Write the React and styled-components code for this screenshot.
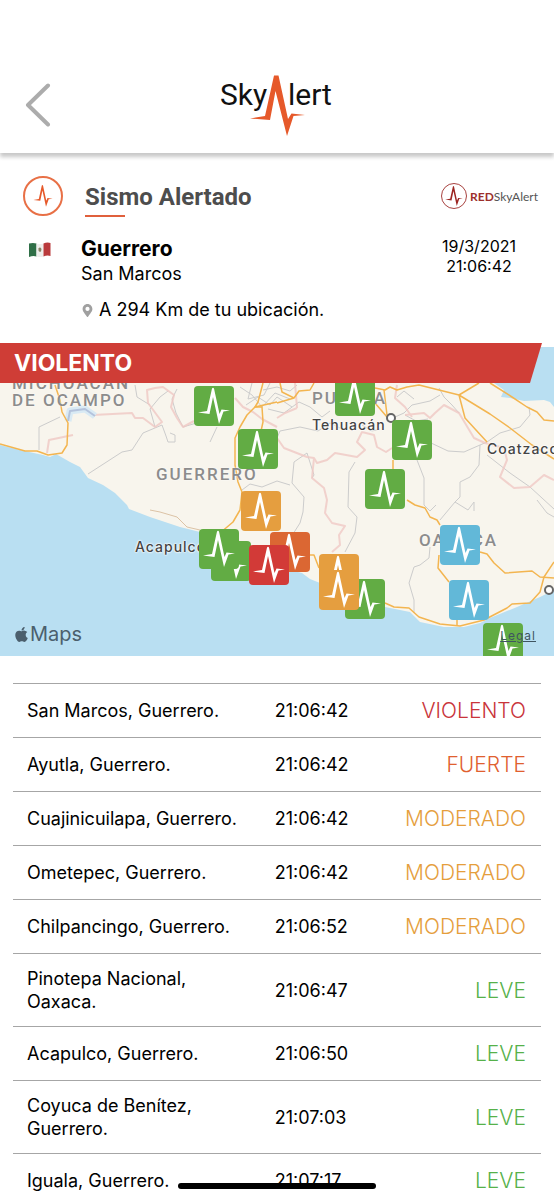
import React from "react";
import styled, { createGlobalStyle } from "styled-components";
import { FaApple, FaMapMarkerAlt } from "react-icons/fa";

const LEVELS = {
  VIOLENTO: { text: "#c9343a", pin: "#d23a37" },
  FUERTE: { text: "#e0602f", pin: "#db6733" },
  MODERADO: { text: "#e59e3c", pin: "#e59e3f" },
  LEVE: { text: "#56b14a", pin: "#62ac44" },
  DEBIL: { text: "#62b8d8", pin: "#62b8d8" },
};

const MAP_WIDTH = 554;
const MAP_HEIGHT = 309;

const stations = [
  { name: "San Marcos, Guerrero.", time: "21:06:42", level: "VIOLENTO" },
  { name: "Ayutla, Guerrero.", time: "21:06:42", level: "FUERTE" },
  { name: "Cuajinicuilapa, Guerrero.", time: "21:06:42", level: "MODERADO" },
  { name: "Ometepec, Guerrero.", time: "21:06:42", level: "MODERADO" },
  { name: "Chilpancingo, Guerrero.", time: "21:06:52", level: "MODERADO" },
  { name: "Pinotepa Nacional, Oaxaca.", time: "21:06:47", level: "LEVE" },
  { name: "Acapulco, Guerrero.", time: "21:06:50", level: "LEVE" },
  { name: "Coyuca de Benítez, Guerrero.", time: "21:07:03", level: "LEVE" },
  { name: "Iguala, Guerrero.", time: "21:07:17", level: "LEVE" },
];

// later pins are drawn over earlier ones
const pins = [
  { x: 194, y: 39, level: "LEVE" },
  { x: 238, y: 82, level: "LEVE" },
  { x: 335, y: 29, level: "LEVE" },
  { x: 392, y: 73, level: "LEVE" },
  { x: 365, y: 122, level: "LEVE" },
  { x: 241, y: 144, level: "MODERADO" },
  { x: 211, y: 194, level: "LEVE" },
  { x: 199, y: 182, level: "LEVE" },
  { x: 270, y: 185, level: "FUERTE" },
  { x: 249, y: 198, level: "VIOLENTO" },
  { x: 345, y: 232, level: "LEVE" },
  { x: 319, y: 207, level: "MODERADO" },
  { x: 319, y: 223, level: "MODERADO" },
  { x: 440, y: 178, level: "DEBIL" },
  { x: 449, y: 233, level: "DEBIL" },
  { x: 483, y: 276, level: "LEVE" },
];

const regions = [
  { x: 12, y: 28, name: "MICHOACÁN" },
  { x: 12, y: 45, name: "DE OCAMPO" },
  { x: 156, y: 119, name: "GUERRERO" },
  { x: 312, y: 43, name: "PUEBLA" },
  { x: 419, y: 185, name: "OAXACA" },
];

const cities = [
  { x: 312, y: 68, name: "Tehuacán" },
  { x: 487, y: 92, name: "Coatzacoalcos" },
  { x: 135, y: 190, name: "Acapulco" },
];

const localRoads = [
  "M88 127 122 105 132 103 143 86 162 78 166 89 168 95 175 95 175 88 170 86",
  "M39 103 39 80 60 70M135 38 137 50 150 58M155 80 150 62 160 50 168 44",
  "M210 95 217 80M177 42 172 52 176 66 183 80 210 72",
  "M307 106 294 115 292 136 304 150 303 165 300 176 293 187 295 196",
  "M307 106 314 128 312 131M355 115 349 125 348 160 357 170 355 186 345 205",
  "M417 113 424 131 424 158 430 164 436 158",
  "M429 95 448 104 464 105 480 98 487 95 500 86 520 80 530 68 529 60",
  "M480 98 479 118 470 130 460 135 460 150 455 155 440 173",
  "M487 108 510 126 530 140 554 162M430 200 429 211 420 218 414 220 409 236 414 253 414 266",
  "M537 153 547 166 554 170M455 155 468 163 474 155 474 164",
  "M240 40 252 48 262 60 275 46 290 52M246 58 258 50 270 58 277 50 292 60M252 36 248 52 264 48 270 36",
  "M263 43 277 40 290 44 297 38M268 62 284 66 299 55 310 60 322 70 330 64",
  "M242 143 250 137 262 140 277 134 290 138M277 91 280 84 300 80 318 84 330 76 342 82",
  "M439 41 444 50 452 58 459 66M395 70 404 66 412 58 430 54 440 48M380 82 372 84 362 78",
  "M397 50 404 44 414 52M405 68 416 74 428 72",
];

const borders = [
  "M93 68 132 66 135 71 143 71 155 80 162 75 148 56 147 43 155 41 163 40 174 48 171 60 177 71 183 80 194 74",
  "M73 88 49 93 47 106",
  "M235 51 243 60 253 65 262 72 277 80",
  "M277 91 284 101 307 110 314 111 317 116 327 113 335 106 357 110 365 103 357 95 362 85 374 88 377 100 386 105 392 101",
  "M314 111 312 131 324 141 327 153 325 166 332 176 345 179 339 188 340 198 332 205",
  "M405 68 424 66 430 71 435 66 444 58 459 66 474 91 485 96 504 101 507 113 500 130 514 141 530 140 544 128 554 133",
  "M295 36 297 61M277 71 285 66 297 61M397 38 395 51 405 60 412 70",
];

const highways = [
  "M0 97 25 104 37 104 48 108 62 106 67 98 68 76 62 65 60 53 55 38",
  "M277 55 255 60 247 68 240 80 235 91 235 118 238 135 242 145 240 163 233 175 220 186",
  "M263 36 258 55 255 60 262 60 263 75 261 84",
  "M277 56 294 51 299 44 310 43 314 36M280 36 282 45 294 51",
  "M375 41 385 43 390 40 397 43 407 40 419 38 459 48 479 36",
  "M459 48 465 71 487 95M459 48 490 67 510 81 532 98 554 112",
  "M490 36 512 50 527 60 537 65 544 73 554 74",
  "M384 43 387 68M375 56 387 70M393 113 393 123",
  "M407 153 415 158 425 161 430 170 437 173 440 178",
  "M480 205 487 207 494 216 505 226 532 224 540 230 554 231",
  "M554 215 544 230 540 245 530 256 512 257 507 261 484 273 460 279 440 277 419 270 409 261 394 260 385 256",
  "M439 208 438 221 449 235M310 208 314 208 319 221M457 271 457 278",
];

// heartbeat mark in a 40 x 40 box
const PULSE =
  "M4 26.5 13 25 18 2.5Q19 1 20 2.5L25.500 28 27.500 23.500 36 24.500 29.500 25.500 25 38 19 11 15.500 28Z";

const Pulse = () => (
  <svg viewBox="0 0 40 40" aria-hidden="true">
    <path d={PULSE} fill="currentColor" />
  </svg>
);

const Logo = () => (
  <LogoSvg viewBox="0 0 112 64" role="img" aria-label="SkyAlert">
    <LogoText x="-1" y="32">
      Sky
    </LogoText>
    <LogoText x="67" y="32">
      lert
    </LogoText>
    <path
      d="M29 45.500 44 43 53 2.500 57.500 2.500 67 46 70.500 40.500 84 42 72.500 43 66 63 54.500 18 49 47Z"
      fill="#e6592a"
    />
  </LogoSvg>
);

const MexicoFlag = () => (
  <Flag viewBox="0 0 22 16" role="img" aria-label="México">
    <path d="M0 1.500Q4 .5 7.500 1.500V14.500Q4 13.500 0 15Z" fill="#2f6f47" />
    <path d="M7.500 1.500Q11 2.500 14.500 1.500V14.500Q11 15.500 7.500 14.500Z" fill="#eeeeec" />
    <path d="M14.500 1.500Q18 0 21.500 1V14Q18 13 14.500 14.500Z" fill="#b93a3c" />
    <path d="M9.500 6.500Q11 4.500 12.500 7L12 9.500Q10 10.500 9.500 8.500Z" fill="#8b8365" />
  </Flag>
);

const Terrain = () => (
  <TerrainSvg
    viewBox={`0 0 ${MAP_WIDTH} ${MAP_HEIGHT}`}
    preserveAspectRatio="none"
    aria-hidden="true"
  >
    <rect width={MAP_WIDTH} height={MAP_HEIGHT} fill="#f8f5ed" />
    <path
      d="M0 98 20 103 43 108 50 110 56 107 70 115 80 120 88 131 103 138 115 146 127 158 129 162 150 170 180 180 200 185 230 205 262 216 302 226 310 232 320 236 345 250 385 260 410 265 420 275 444 280 464 280 480 276 490 271 517 260 540 250 554 243V309H0Z"
      fill="#b9dff2"
    />
    <path
      d="M480 0V30L494 36 504 43 501 50 510 51 524 54 544 53 550 55 554 60V0Z"
      fill="#b9dff2"
    />
    <g fill="none" strokeLinejoin="round">
      <g stroke="#cccccc">
        {localRoads.map((d) => (
          <path key={d} d={d} />
        ))}
      </g>
      <g stroke="#f0c9c5" strokeWidth="2" opacity="0.8">
        {borders.map((d) => (
          <path key={d} d={d} />
        ))}
      </g>
      <path d="M68 74 70 64 85 62 95 69" stroke="#d9eaf4" strokeWidth="7" />
      <path d="M68 74 70 64 85 62 95 69" stroke="#b4c3dc" strokeWidth="2" />
      <path d="M150 163 160 165 177 170 187 180 200 183" stroke="#dcc3a6" />
      <g stroke="#f3b550" strokeWidth="1.5">
        {highways.map((d) => (
          <path key={d} d={d} />
        ))}
      </g>
    </g>
  </TerrainSvg>
);

const QuakeMap = () => (
  <MapArea aria-label="Mapa del sismo">
    <Terrain />
    {regions.map((r) => (
      <Region key={r.name} $x={r.x} $y={r.y}>
        {r.name}
      </Region>
    ))}
    {cities.map((c) => (
      <City key={c.name} $x={c.x} $y={c.y}>
        {c.name}
      </City>
    ))}
    <Town $x={386} $y={66} />
    <Town $x={544} $y={238} />
    {pins.map((p) => (
      <Pin key={`${p.x}-${p.y}`} $x={p.x} $y={p.y} $color={LEVELS[p.level].pin}>
        <Pulse />
      </Pin>
    ))}
    <MapsBrand>
      <FaApple size={17} />
      Maps
    </MapsBrand>
    <LegalLink href="#legal">Legal</LegalLink>
  </MapArea>
);

const App = () => {
  return (
    <Screen>
      <GlobalStyle />
      <Header>
        <BackButton type="button" aria-label="Regresar">
          <svg width="26" height="44" viewBox="0 0 26 44" aria-hidden="true">
            <path
              d="M23 2.500 3 22 23 41.500"
              fill="none"
              stroke="#acacac"
              strokeWidth="4"
              strokeLinecap="round"
              strokeLinejoin="round"
            />
          </svg>
        </BackButton>
        <Logo />
      </Header>

      <TitleRow>
        <AlertIcon>
          <Pulse />
        </AlertIcon>
        <Title>Sismo Alertado</Title>
        <RedBrand>
          <RedIcon>
            <Pulse />
          </RedIcon>
          <span>
            <b>RED</b>SkyAlert
          </span>
        </RedBrand>
      </TitleRow>

      <Details>
        <MexicoFlag />
        <Place>
          <State>Guerrero</State>
          <Municipality>San Marcos</Municipality>
          <Distance>
            <FaMapMarkerAlt size={13} color="#a0a0a0" />
            A 294 Km de tu ubicación.
          </Distance>
        </Place>
        <DateTime>
          19/3/2021
          <br />
          21:06:42
        </DateTime>
      </Details>

      <Banner>VIOLENTO</Banner>
      <QuakeMap />

      <ListArea>
        <List>
          <tbody>
            {stations.map((s) => (
              <tr key={s.name}>
                <NameCell>{s.name}</NameCell>
                <TimeCell>{s.time}</TimeCell>
                <LevelCell $color={LEVELS[s.level].text}>{s.level}</LevelCell>
              </tr>
            ))}
          </tbody>
        </List>
      </ListArea>
      <HomeBar />
    </Screen>
  );
};

export default App;

// styles

const GlobalStyle = createGlobalStyle`
  * {
    box-sizing: border-box;
  }
  body {
    margin: 0;
    background: #fff;
    color: #000;
    font-family: Inter, "Liberation Sans", sans-serif;
  }
`;

const Screen = styled.div`
  display: flex;
  flex-direction: column;
  height: 100vh;
  overflow: hidden;
`;

const Header = styled.header`
  display: grid;
  grid-template-columns: 1fr auto 1fr;
  align-items: center;
  flex-shrink: 0;
  padding: 73px 25px 16px;
  box-shadow: 0 4px 4px rgba(0, 0, 0, 0.22);
`;

const BackButton = styled.button`
  justify-self: start;
  display: flex;
  padding: 0;
  border: none;
  background: none;
  cursor: pointer;
`;

const LogoSvg = styled.svg`
  width: 112px;
  height: 64px;
  overflow: visible;
`;

const LogoText = styled.text`
  font-family: Roboto, sans-serif;
  font-size: 30px;
  fill: #111;
`;

const TitleRow = styled.div`
  display: flex;
  align-items: center;
  flex-shrink: 0;
  padding: 22px 16px 0 23px;
`;

const AlertIcon = styled.span`
  display: flex;
  align-items: center;
  justify-content: center;
  width: 40px;
  height: 40px;
  border: 2px solid #e87046;
  border-radius: 50%;
  color: #e6592a;
  svg {
    width: 24px;
    height: 24px;
  }
`;

const Title = styled.h1`
  flex: 1;
  margin: 4px 0 0 22px;
  font-family: Roboto, sans-serif;
  font-size: 24px;
  line-height: 36px;
  font-weight: 700;
  color: #4d4d4d;
  &::after {
    content: "";
    display: block;
    width: 40px;
    height: 2px;
    background: #e0603c;
  }
`;

const RedBrand = styled.div`
  display: flex;
  align-items: center;
  gap: 3px;
  font-family: Lato, sans-serif;
  font-size: 12px;
  color: #555;
  b {
    color: #9c2f2c;
  }
`;

const RedIcon = styled.span`
  display: flex;
  align-items: center;
  justify-content: center;
  width: 26px;
  height: 26px;
  border: 1px solid #a8423f;
  border-radius: 50%;
  color: #9c2420;
  svg {
    width: 22px;
    height: 22px;
  }
`;

const Details = styled.div`
  display: flex;
  align-items: flex-start;
  flex-shrink: 0;
  padding: 19px 38px 21px 29px;
`;

const Flag = styled.svg`
  width: 22px;
  height: 16px;
  margin-top: 6px;
`;

const Place = styled.div`
  flex: 1;
  margin-left: 30px;
`;

const State = styled.h2`
  margin: 0;
  font-size: 21px;
  line-height: 26px;
  font-weight: 700;
`;

const Municipality = styled.p`
  margin: 0;
  font-size: 18px;
  line-height: 24px;
`;

const Distance = styled.p`
  display: flex;
  align-items: center;
  gap: 5px;
  margin: 12px 0 0;
  font-size: 18px;
  line-height: 24px;
`;

const DateTime = styled.p`
  margin: 0;
  font-size: 16px;
  line-height: 20px;
  text-align: center;
`;

const Banner = styled.div`
  position: relative;
  z-index: 1;
  flex-shrink: 0;
  margin: 0 12px -36px 0;
  padding-left: 14px;
  background: #cf3d36;
  clip-path: polygon(0 0, 100% 0, calc(100% - 12px) 100%, 0 100%);
  font-size: 23px;
  line-height: 40px;
  font-weight: 700;
  color: #fff;
`;

const MapArea = styled.section`
  position: relative;
  flex-shrink: 0;
  height: ${MAP_HEIGHT}px;
  overflow: hidden;
`;

const TerrainSvg = styled.svg`
  display: block;
  width: 100%;
  height: 100%;
`;

const MapItem = styled.span`
  position: absolute;
  left: ${({ $x }) => ($x / MAP_WIDTH) * 100}%;
  top: ${({ $y }) => $y}px;
`;

const Pin = styled(MapItem)`
  width: 40px;
  height: 40px;
  border-radius: 4px;
  background: ${({ $color }) => $color};
  color: #fff;
`;

const Region = styled(MapItem)`
  font-family: Roboto, sans-serif;
  font-size: 17px;
  line-height: 16px;
  font-weight: 500;
  letter-spacing: 2px;
  color: #8c8c8c;
  text-shadow: 0 0 2px #fff;
  white-space: nowrap;
`;

const City = styled(MapItem)`
  font-size: 14px;
  line-height: 20px;
  font-weight: 500;
  letter-spacing: 1px;
  color: #444;
  text-shadow: 0 0 2px #fff, 0 0 2px #fff, 0 0 2px #fff;
  white-space: nowrap;
`;

const Town = styled(MapItem)`
  width: 10px;
  height: 10px;
  border: 2px solid #666;
  border-radius: 50%;
  background: #fff;
`;

const MapsBrand = styled.span`
  position: absolute;
  left: 13px;
  bottom: 10px;
  display: flex;
  align-items: center;
  font-size: 20px;
  line-height: 24px;
  color: #4b5f6d;
`;

const LegalLink = styled.a`
  position: absolute;
  right: 18px;
  bottom: 12px;
  font-size: 12px;
  line-height: 16px;
  letter-spacing: 1px;
  color: #3f5560;
`;

const ListArea = styled.main`
  flex: 1;
  min-height: 0;
  margin-top: 27px;
  padding: 0 13px;
  overflow-y: auto;
  scrollbar-width: none;
`;

const List = styled.table`
  width: 100%;
  border-collapse: separate;
  border-spacing: 0;
`;

const Cell = styled.td`
  height: 54px;
  padding: 13px 0;
  border-top: 1px solid #a6a6a6;
  font-size: 18px;
  line-height: 23px;
  vertical-align: middle;
`;

const NameCell = styled(Cell)`
  width: 49%;
  padding: 13px 32px 13px 14px;
`;

const TimeCell = styled(Cell)`
  padding: 13px 0 13px 3px;
`;

const LevelCell = styled(Cell)`
  padding: 13px 15px 13px 0;
  font-size: 21px;
  font-weight: 300;
  text-align: right;
  color: ${({ $color }) => $color};
`;

const HomeBar = styled.div`
  position: fixed;
  left: 50%;
  bottom: 11px;
  width: 198px;
  height: 6px;
  margin-left: -99px;
  border-radius: 3px;
  background: #000;
`;
